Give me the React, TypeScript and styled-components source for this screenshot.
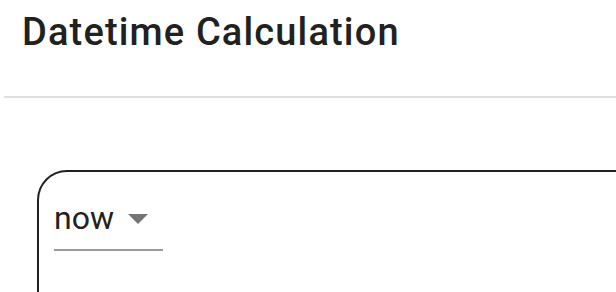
import React from "react";
import styled, { createGlobalStyle } from "styled-components";

const GlobalStyle = createGlobalStyle`
  html, body {
    margin: 0;
    padding: 0;
    background: #fff;
    overflow: hidden;
  }
  body {
    font-family: Roboto, "Liberation Sans", sans-serif;
    color: #212121;
  }
`;

const Page = styled.div`
  width: 616px;
  height: 292px;
  overflow: hidden;
`;

const Header = styled.header`
  box-sizing: border-box;
  height: 96px;
  padding: 10px 0 0 22px;
`;

const Title = styled.h1`
  margin: 0;
  font-size: 38px;
  font-weight: 500;
  line-height: 44px;
  letter-spacing: 1.15px;
  color: #212121;
`;

const Divider = styled.hr`
  margin: 0 0 0 4px;
  border: none;
  height: 2px;
  background: #e0e0e0;
`;

const Main = styled.main`
  padding: 72px 0 0 37px;
`;

const Card = styled.section`
  box-sizing: border-box;
  width: 640px;
  min-height: 220px;
  border: 2px solid #212121;
  border-radius: 30px;
  padding: 28px 0 0 15px;
`;

const Select = styled.div`
  box-sizing: border-box;
  width: 109px;
  display: flex;
  align-items: center;
  padding-bottom: 13px;
  border-bottom: 2px solid #9a9a9a;
  cursor: pointer;
`;

const SelectValue = styled.span`
  font-size: 32px;
  line-height: 36px;
  color: #212121;
`;

const Arrow = styled.svg`
  width: 20px;
  height: 10px;
  margin-left: 14px;
  margin-top: 2px;
  fill: #757575;
`;

const App = () => {
  return (
    <Page>
      <GlobalStyle />
      <Header>
        <Title>Datetime Calculation</Title>
      </Header>
      <Divider />
      <Main>
        <Card>
          <Select>
            <SelectValue>now</SelectValue>
            <Arrow viewBox="0 0 20 10">
              <path d="M0 0 L20 0 L10 10 Z" />
            </Arrow>
          </Select>
        </Card>
      </Main>
    </Page>
  );
};

export default App;
